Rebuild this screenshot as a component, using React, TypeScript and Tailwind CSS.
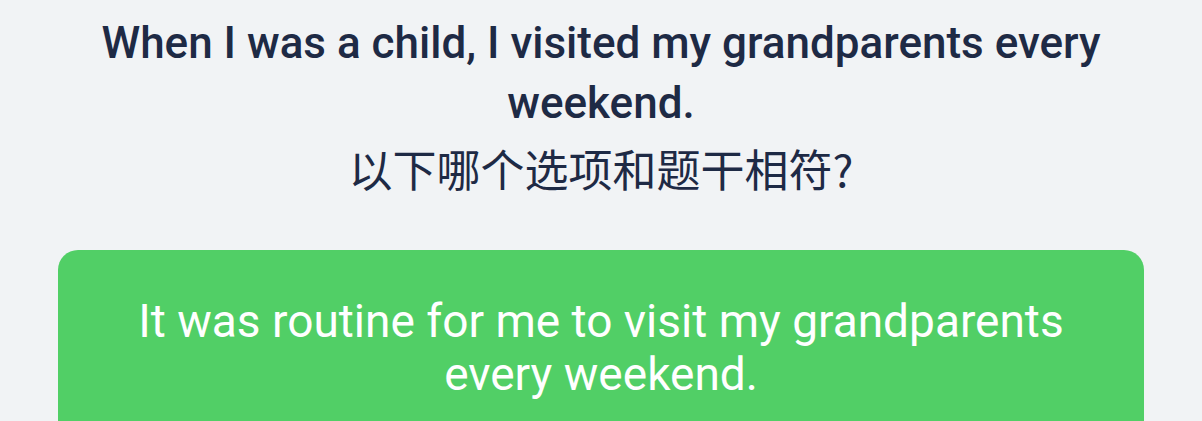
export default function App() {
  return (
    <div className="min-h-screen w-full bg-[#f1f3f5] font-['Roboto','Noto_Sans_CJK_SC',sans-serif]">
      <div className="flex flex-col items-center px-[58px] pt-[13px]">
        <h1 className="max-w-[1040px] text-center text-[44px] leading-[60px] font-medium text-[#1e2a45]">
          When I was a child, I visited my grandparents every weekend.
        </h1>
        <p className="text-center font-['Noto_Sans_CJK_SC',sans-serif] text-[44px] leading-[70px] text-[#1e2a45]">
          以下哪个选项和题干相符?
        </p>
        <div className="mt-[47px] w-full">
          <button className="w-full rounded-[20px] bg-[#51cf66] px-[80px] pt-[45px] pb-[40px] text-center text-[46px] leading-[53px] text-white">
            It was routine for me to visit my grandparents every weekend.
          </button>
        </div>
      </div>
    </div>
  );
}
